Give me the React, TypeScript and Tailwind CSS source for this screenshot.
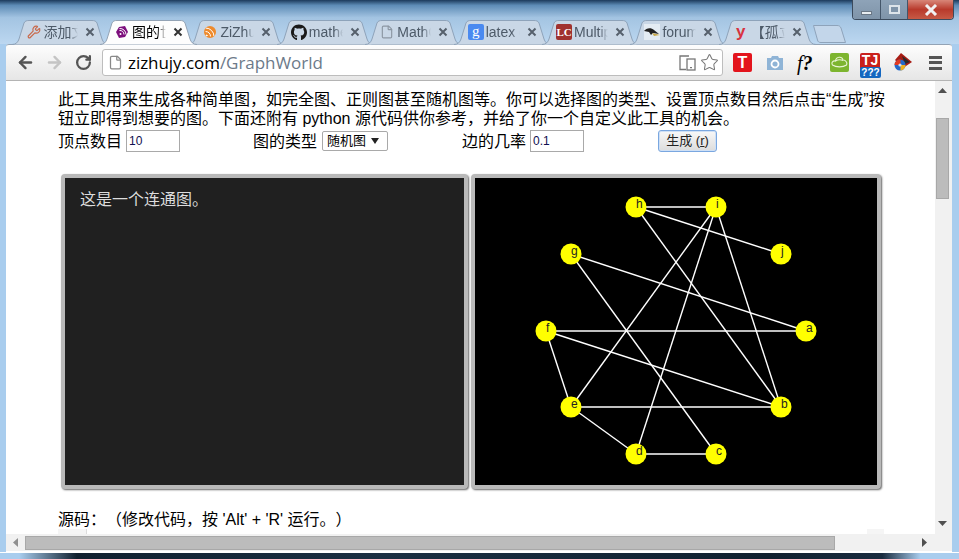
import { ArrowLeft, ArrowRight, RotateCw, Star, Wrench, File, Rss } from "lucide-react";
import { FaGithub } from "react-icons/fa";
import type { ReactNode } from "react";

// ── Tabs ──────────────────────────────────────────────────────────────────────

const TAB_PATH = "M0 24.5 C4 24.5 6 22 7 19 L12 3 C13 1 14.5 .5 17 .5 L80 .5 C82.5 .5 84 1 85 3 L90 19 C91 22 93 24.5 97 24.5";

function Tab({ icon, title, active }: { icon: ReactNode; title: string; active?: boolean }) {
  return (
    <div className={`relative w-[97px] h-[25px] mr-[-8.6px] shrink-0 ${active ? "z-10" : ""}`}>
      <svg width="97" height="25" viewBox="0 0 97 25" className="absolute inset-0">
        <path d={TAB_PATH} fill={active ? "#fdfdfd" : "#c9d7e6"} stroke={active ? "#93a3b5" : "#8ea3ba"} strokeWidth="1" />
      </svg>
      <div className="relative flex items-center h-full pl-[14px] pb-[1px]">
        <span className="w-4 h-4 flex items-center justify-center shrink-0">{icon}</span>
        <span
          className={`ml-[2px] w-[34px] whitespace-nowrap overflow-hidden text-[14px] leading-[18px] [mask-image:linear-gradient(to_right,black_75%,transparent)] ${
            active ? "text-black" : "text-[#4d5a68]"
          }`}
        >
          {title}
        </span>
        <svg width="10" height="10" viewBox="0 0 10 10" className="ml-[7px] shrink-0">
          <path d="M1.5 1.5 L8.5 8.5 M8.5 1.5 L1.5 8.5" stroke={active ? "#333" : "#56606c"} strokeWidth="2" />
        </svg>
      </div>
    </div>
  );
}

function PurpleIcon() {
  return (
    <svg width="12" height="12" viewBox="0 0 12 12">
      <path d="M3 1 L9 0 L12 6 L9 11 L3 12 L0 6 Z" fill="#7d0f7d" />
      <circle cx="4.5" cy="8" r="1" fill="#fff" />
      <path d="M3.5 4.5 A4 4 0 0 1 8 8.5 M3.5 2.5 A6 6 0 0 1 10 8.5" fill="none" stroke="#fff" strokeWidth="1" />
    </svg>
  );
}

function BirdIcon() {
  return (
    <svg width="16" height="16" viewBox="0 0 16 16">
      <rect width="16" height="16" fill="#e4ecf3" />
      <path d="M0 7 C2 4 7 3 10 6 L15 10 L9 9 L7 11 L5 8 Z" fill="#222" />
      <path d="M8 9 L16 11 L10 12 Z" fill="#c9a94a" />
    </svg>
  );
}

// ── Toolbar icons ─────────────────────────────────────────────────────────────

function DeviceIcon() {
  return (
    <svg width="17" height="16" viewBox="0 0 17 16" fill="none" stroke="#777" strokeWidth="1.3">
      <path d="M10 1 H1 V14.5 H7" />
      <rect x="8" y="4" width="8" height="11" fill="#fff" />
      <path d="M11 12.7 H13" />
    </svg>
  );
}

function TJIcon() {
  return (
    <div className="relative w-[21px] h-[25px]">
      <div className="absolute top-0 left-0 w-[20px] h-[18px] bg-[#c9201c] rounded-[2px] text-white text-[14px] leading-[15px] font-bold text-center [font-family:'Liberation_Sans',sans-serif]">
        TJ
      </div>
      <div className="absolute bottom-0 left-0 w-[21px] h-[11px] bg-[#1467c0] rounded-[2px] text-white text-[10px] leading-[11px] font-bold text-center [font-family:'Liberation_Sans',sans-serif]">
        ???
      </div>
    </div>
  );
}

function CloudIcon() {
  return (
    <div className="w-[19px] h-[19px] bg-[#7db52f] rounded-[2px] flex items-center justify-center">
      <svg width="17" height="15" viewBox="0 0 17 15" fill="none" stroke="#e9f4d4" strokeWidth="1.1">
        <path d="M1.5 10 C0 7.5 2 5.5 4.5 6 C5 1.5 11 1 12 5 C15 5 16.5 8 15.5 10 C12 12.5 5 12.5 1.5 10 Z" />
        <path d="M4.5 6 C7 4.5 10 4.5 12 5.5" />
      </svg>
    </div>
  );
}

function ColorIcon() {
  return (
    <svg width="20" height="20" viewBox="0 0 20 20">
      <path d="M8 0 L19 9 L10 15 L2 7 Z" fill="#a81c14" />
      <path d="M9 3 L17 9 L12 11 Z" fill="#2a2a2a" />
      <circle cx="7" cy="12" r="5.5" fill="#2468c8" />
      <path d="M1.5 12 A5.5 5.5 0 0 1 7.5 6.5 L7.5 12 Z" fill="#e23a22" />
      <path d="M7.5 12 L12.5 12 A5.5 5.5 0 0 1 7.5 17.5 Z" fill="#f2b11c" />
      <circle cx="7" cy="12" r="1.6" fill="#cfe0f5" />
    </svg>
  );
}

// ── Graph ─────────────────────────────────────────────────────────────────────

const NODES: Record<string, [number, number]> = {
  a: [806, 330],
  b: [781, 406],
  c: [716, 453],
  d: [636, 453],
  e: [571, 406],
  f: [546, 330],
  g: [571, 253],
  h: [636, 206],
  i: [716, 206],
  j: [781, 253],
};

const EDGES = ["hi", "hj", "hb", "ie", "id", "ib", "ga", "gc", "fa", "fb", "fe", "eb", "ed", "dc"];

function Graph() {
  return (
    <svg width="402" height="307" viewBox="475 177 402 307" className="block">
      {EDGES.map((e) => {
        const [x1, y1] = NODES[e[0]];
        const [x2, y2] = NODES[e[1]];
        return <line key={e} x1={x1} y1={y1} x2={x2} y2={y2} stroke="#fff" strokeWidth="1.4" />;
      })}
      {Object.entries(NODES).map(([name, [x, y]]) => (
        <g key={name}>
          <circle cx={x} cy={y} r="10.5" fill="#ffff00" />
          <text x={x} y={y + 1} fontSize="12" fill="#222" fontFamily="'Liberation Sans', sans-serif">
            {name}
          </text>
        </g>
      ))}
    </svg>
  );
}

// ── Page ──────────────────────────────────────────────────────────────────────

function TextInput({ value }: { value: string }) {
  return (
    <div className="w-[54px] h-[22px] border border-[#a9a9a9] bg-white pl-[2px] text-[12px] leading-[20px] text-[#101050]">
      {value}
    </div>
  );
}

function Panel({ className, children }: { className: string; children: ReactNode }) {
  return (
    <div className={`border-4 border-[#b9b9b9] rounded-[4px] shadow-[1px_1px_2px_#666] overflow-hidden h-[315px] ${className}`}>
      {children}
    </div>
  );
}

export default function App() {
  return (
    <div className="w-[959px] h-[559px] overflow-hidden flex flex-col bg-[#a9cdee] [text-spacing-trim:space-all] [font-family:'Liberation_Sans','Noto_Sans_CJK_SC',sans-serif]">
      {/* Title bar and tab strip */}
      <div className="relative h-[44px] shrink-0 pl-[11.6px] pt-[20px] flex bg-[linear-gradient(to_bottom,#1c3a5c_0%,#5d8bb6_12%,#a3c4e2_40%,#bcd7f0_100%)]">
        <Tab icon={<Wrench size={14} color="#c9694a" />} title="添加文章" />
        <Tab active icon={<PurpleIcon />} title="图的世界" />
        <Tab icon={<Rss size={12} color="#fff" className="bg-[#ee8a2c] rounded-full" />} title="ZiZhujy" />
        <Tab icon={<FaGithub size={17} color="#1a1a1a" />} title="mathematics" />
        <Tab icon={<File size={14} color="#8c97a3" />} title="MathGraph" />
        <Tab
          icon={
            <span className="w-[16px] h-[16px] shrink-0 bg-[#4a8af0] rounded-[2px] text-white text-[15px] leading-[15px] text-center [font-family:'Liberation_Serif',serif]">g</span>
          }
          title="latex graph"
        />
        <Tab
          icon={
            <span className="w-[16px] h-[16px] shrink-0 bg-[#a0322f] rounded-[2px] text-white text-[11px] leading-[16px] font-bold text-center [font-family:'Liberation_Serif',serif]">
              LC
            </span>
          }
          title="Multiple"
        />
        <Tab icon={<BirdIcon />} title="forum" />
        <Tab
          icon={<span className="text-[#d8333f] text-[17px] leading-[14px] font-bold [font-family:'Liberation_Sans',sans-serif]">y</span>}
          title="【孤立"
        />
        <svg width="33" height="18" viewBox="0 0 33 18" className="ml-[6px] mt-[5px] shrink-0">
          <path d="M.5 .5 H24 C26 .5 27 1 28 3 L32.5 17.5 H8 C6 17.5 5 17 4.5 15 Z" fill="#c3d6ea" stroke="#8ea3ba" />
        </svg>

        {/* Window controls */}
        <div className="absolute right-[5px] top-0 w-[102px] h-[20px] flex border border-t-0 border-[#3b4a5c] rounded-b-[4px] overflow-hidden">
          <div className="w-[28px] bg-[linear-gradient(to_bottom,#8ea3b8,#7f94a9)] flex items-end justify-center pb-[4px] border-r border-[#44566a]">
            <div className="w-[11px] h-[4px] bg-[#e8edf1] border border-[#6a7785]" />
          </div>
          <div className="w-[27px] bg-[linear-gradient(to_bottom,#8ea3b8,#7f94a9)] flex items-center justify-center border-r border-[#44566a]">
            <div className="w-[11px] h-[9px] border-2 border-[#dde4ea] bg-[#7f94a9]" />
          </div>
          <div className="flex-1 bg-[linear-gradient(to_bottom,#d88678,#b83a2c_50%,#c65a45)] flex items-center justify-center">
            <svg width="14" height="12" viewBox="0 0 14 12">
              <path d="M2 1 L12 11 M12 1 L2 11" stroke="#f1f1f1" strokeWidth="3" />
            </svg>
          </div>
        </div>
      </div>

      {/* Browser window */}
      <div className="flex-1 min-h-0 mx-[6px] mr-[7px] flex flex-col rounded-t-[3px] bg-white">
        {/* Toolbar */}
        <div className="h-[37px] shrink-0 flex items-center border-t border-[#93a3b5] border-b border-b-[#b4b4b4] bg-[linear-gradient(to_bottom,#fdfdfd,#e6e6e6)] rounded-t-[3px]">
          <ArrowLeft size={19} color="#555" strokeWidth={3} className="ml-[10px]" />
          <ArrowRight size={19} color="#c4c4c4" strokeWidth={3} className="ml-[10px]" />
          <RotateCw size={17} color="#555" strokeWidth={3.2} className="ml-[11px]" />
          {/* Omnibox */}
          <div className="ml-[10px] w-[621px] h-[27px] bg-white border border-[#bdbdbd] rounded-[3px] flex items-center">
            <File size={15} color="#888" className="ml-[5px] shrink-0" />
            <span className="ml-[5px] text-[17px] leading-[24px] text-black [font-family:'Open_Sans',sans-serif] tracking-[-0.05px]">
              zizhujy.com<span className="text-[#6c7a8a]">/GraphWorld</span>
            </span>
            <div className="ml-auto flex items-center gap-[4px] mr-[3px]">
              <DeviceIcon />
              <Star size={19} color="#777" strokeWidth={1.3} />
            </div>
          </div>
          {/* Extensions */}
          <div className="ml-[10px] w-[19px] h-[19px] bg-[#e3141c] rounded-[2px] text-white text-[16px] leading-[19px] font-bold text-center">T</div>
          <svg width="18" height="16" viewBox="0 0 18 16" className="ml-[14px]">
            <path d="M1 3 H5 L6 1 H12 L13 3 H17 V15 H1 Z" fill="#8fb4d6" />
            <circle cx="9" cy="9" r="3.5" fill="#8fb4d6" stroke="#fff" strokeWidth="1.8" />
          </svg>
          <span className="ml-[13px] w-[20px] text-[20px] leading-[20px] italic text-black whitespace-nowrap [font-family:'Liberation_Serif',serif]">
            f<span className="font-bold">?</span>
          </span>
          <div className="ml-[13px]">
            <CloudIcon />
          </div>
          <div className="ml-[11px] mt-[5px]">
            <TJIcon />
          </div>
          <div className="ml-[12px]">
            <ColorIcon />
          </div>
          <div className="ml-[16px] w-[13px] flex flex-col gap-[2.5px]">
            <div className="h-[3px] bg-[#555]" />
            <div className="h-[3px] bg-[#555]" />
            <div className="h-[3px] bg-[#555]" />
          </div>
        </div>

        {/* Viewport + vertical scrollbar */}
        <div className="flex h-[453px] shrink-0">
          <div className="w-[929px] overflow-hidden pl-[52px] pt-[9px] text-[16px] leading-[19px] text-black relative">
            <p className="w-[830px]">
              此工具用来生成各种简单图，如完全图、正则图甚至随机图等。你可以选择图的类型、设置顶点数目然后点击“生成”按钮立即得到想要的图。下面还附有 python
              源代码供你参考，并给了你一个自定义此工具的机会。
            </p>
            <div className="flex items-center h-[22px] mt-[2px]">
              <div className="w-[195px] flex items-center gap-[4px]">
                <span>顶点数目</span>
                <TextInput value="10" />
              </div>
              <div className="w-[209px] flex items-center gap-[5px]">
                <span>图的类型</span>
                <div className="w-[66px] h-[20px] border border-[#a9a9a9] rounded-[2px] bg-white flex items-center pl-[4px] text-[13px] leading-[18px]">
                  随机图
                  <svg width="8" height="6" viewBox="0 0 8 6" className="ml-[5px]">
                    <path d="M0 0 H8 L4 6 Z" fill="#222" />
                  </svg>
                </div>
              </div>
              <div className="w-[196px] flex items-center gap-[4px]">
                <span>边的几率</span>
                <TextInput value="0.1" />
              </div>
              <div className="w-[59px] h-[22px] border border-[#7aa7e0] rounded-[3px] bg-[linear-gradient(to_bottom,#f8f8f8,#dcdcdc)] text-[13px] leading-[20px] text-center text-[#222] shadow-[inset_0_0_0_1px_#cfe0f5]">
                生成 (<span className="underline">r</span>)
              </div>
            </div>

            {/* Panels */}
            <div className="flex gap-[3px] mt-[22px] ml-[3px]">
              <Panel className="w-[407px] bg-[#202020]">
                <p className="pl-[15px] pt-[13px] text-[#dddddd] text-[16px] leading-[18px]">这是一个连通图。</p>
              </Panel>
              <Panel className="w-[410px] bg-black">
                <Graph />
              </Panel>
            </div>

            <p className="mt-[22px] leading-[18px]">源码：（修改代码，按 'Alt' + 'R' 运行。）</p>
            <div className="w-[826px] flex justify-between">
              <div className="w-[29px] h-[8px] bg-[#f5f5f5] border-r border-[#dddddd]" />
              <div className="w-[17px] h-[8px] bg-[#f5f5f5]" />
            </div>
          </div>

          {/* Vertical scrollbar */}
          <div className="w-[17px] bg-[#f1f1f1] flex flex-col items-center pl-px pr-[3px]">
            <svg width="9" height="5" viewBox="0 0 9 5" className="mt-[7px] shrink-0">
              <path d="M0 5 H9 L4.5 0 Z" fill="#505050" />
            </svg>
            <div className="w-[13px] h-[81px] mt-[25px] shrink-0 bg-[#bcbcbc] border border-[#a8a8a8]" />
            <svg width="9" height="5" viewBox="0 0 9 5" className="mt-auto mb-[8px] shrink-0">
              <path d="M0 0 H9 L4.5 5 Z" fill="#505050" />
            </svg>
          </div>
        </div>

        {/* Horizontal scrollbar */}
        <div className="h-[17px] shrink-0 bg-[#f1f1f1] flex items-center">
          <svg width="5" height="9" viewBox="0 0 5 9" className="ml-[7px]">
            <path d="M5 0 V9 L0 4.5 Z" fill="#909090" />
          </svg>
          <div className="ml-[7px] w-[810px] h-[14px] bg-[#bcbcbc] border border-[#a8a8a8]" />
          <svg width="5" height="9" viewBox="0 0 5 9" className="ml-[87px]">
            <path d="M0 0 V9 L5 4.5 Z" fill="#505050" />
          </svg>
        </div>
      </div>

      {/* Window bottom edge */}
      <div className="h-[7px] shrink-0 bg-[linear-gradient(to_right,#a9cdee_0%,#a9cdee_2%,#10202f_8%,#1b2f42_40%,#10202f_80%,#1a2c3f_92%,#a9cdee_96%)] border-t border-white" />
    </div>
  );
}
